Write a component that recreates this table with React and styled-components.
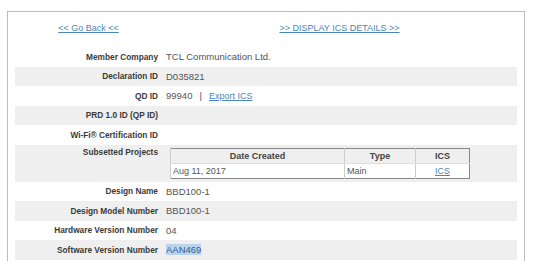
import React from "react";
import styled, { createGlobalStyle } from "styled-components";

const rows = [
  { label: "Member Company", value: "TCL Communication Ltd." },
  { label: "Declaration ID", value: "D035821" },
  { label: "QD ID", value: "99940", exportLink: true },
  { label: "PRD 1.0 ID (QP ID)", value: "" },
  { label: "Wi-Fi® Certification ID", value: "" },
  { label: "Subsetted Projects", projects: true },
  { label: "Design Name", value: "BBD100-1" },
  { label: "Design Model Number", value: "BBD100-1" },
  { label: "Hardware Version Number", value: "04" },
  { label: "Software Version Number", value: "AAN469", selected: true }
];

const App = () => (
  <>
    <GlobalStyle />
    <Panel>
      <LinkRow>
        <LinkCell>
          <Link href="#">&lt;&lt; Go Back &lt;&lt;</Link>
        </LinkCell>
        <LinkCell>
          <Link href="#">&gt;&gt; DISPLAY ICS DETAILS &gt;&gt;</Link>
        </LinkCell>
      </LinkRow>
      {rows.map((row, i) => (
        <Row key={row.label} striped={i % 2 === 1} tall={row.projects}>
          <Label>{row.label}</Label>
          <Value>
            {row.projects ? (
              <Projects>
                <thead>
                  <tr>
                    <Th style={{ width: 169 }}>Date Created</Th>
                    <Th style={{ width: 66 }}>Type</Th>
                    <Th>ICS</Th>
                  </tr>
                </thead>
                <tbody>
                  <tr>
                    <Td>Aug 11, 2017</Td>
                    <Td>Main</Td>
                    <Td center>
                      <Link href="#">ICS</Link>
                    </Td>
                  </tr>
                </tbody>
              </Projects>
            ) : row.selected ? (
              <Selected>{row.value}</Selected>
            ) : (
              row.value
            )}
            {row.exportLink && (
              <>
                <Pipe>|</Pipe>
                <Link href="#">Export ICS</Link>
              </>
            )}
          </Value>
        </Row>
      ))}
    </Panel>
  </>
);

export default App;

const GlobalStyle = createGlobalStyle`
  body {
    margin: 0;
    background: #fff;
    font-family: "Liberation Sans", Arial, sans-serif;
    overflow: hidden;
  }
`;

const Panel = styled.div`
  margin: 11px 0 0 7px;
  width: 518px;
  box-sizing: border-box;
  border: 1px solid #bbb;
  padding: 0 7px 20px;
`;

const LinkRow = styled.div`
  display: grid;
  grid-template-columns: 147px 1fr;
  height: 35px;
  align-items: center;
`;

const LinkCell = styled.div`
  text-align: center;
  font-size: 9px;
  padding-bottom: 3px;
`;

const Link = styled.a`
  color: #4a86b8;
  text-decoration: underline;
  font-size: 9px;
`;

const Row = styled.div`
  display: grid;
  grid-template-columns: 147px 1fr;
  align-items: ${props => (props.tall ? "start" : "center")};
  height: ${props => (props.tall ? "37px" : "19.5px")};
  background: ${props => (props.striped ? "#efefef" : "transparent")};
  box-sizing: border-box;
  padding-top: ${props => (props.tall ? "2px" : "0")};
`;

const Label = styled.div`
  text-align: right;
  font-weight: bold;
  font-size: 8.3px;
  color: #3a3a3a;
  padding-right: 4px;
`;

const Value = styled.div`
  font-size: 9.5px;
  color: #555;
  padding-left: 4px;
  display: flex;
  align-items: center;
`;

const Pipe = styled.span`
  margin: 0 7px;
  color: #555;
`;

const Selected = styled.span`
  background: #b8d4ef;
  color: #3a5f8a;
`;

const Projects = styled.table`
  width: 300px;
  margin-left: 4px;
  margin-top: 1px;
  border-collapse: collapse;
  border: 1px solid #888;
  background: #fff;
  font-size: 9px;
`;

const Th = styled.th`
  background: #efefef;
  color: #444;
  font-weight: bold;
  height: 14px;
  padding: 0 2px;
  text-align: center;
  border-left: 1px solid #ccc;
  border-bottom: 1px solid #ddd;
`;

const Td = styled.td`
  color: #555;
  height: 14px;
  padding: 0 2px;
  text-align: ${props => (props.center ? "center" : "left")};
  border-left: 1px solid #ccc;
`;
